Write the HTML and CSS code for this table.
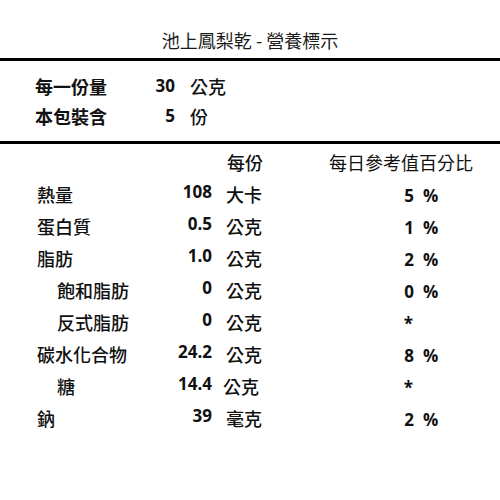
FILE: index.html
```html
<!DOCTYPE html>
<html lang="zh-Hant">
<head>
<meta charset="utf-8">
<title>池上鳳梨乾 - 營養標示</title>
<link rel="stylesheet" href="styles.css">
</head>
<body>
<div class="label">
  <h1 class="title">池上鳳梨乾 - 營養標示</h1>
  <div class="rule"></div>
  <div class="serving">
    <span class="s-name">每一份量</span><span class="s-val">30</span><span class="s-unit">公克</span>
    <span class="s-name">本包裝含</span><span class="s-val">5</span><span class="s-unit">份</span>
  </div>
  <div class="rule"></div>
  <div class="facts">
    <span class="h-blank"></span><span class="h-per">每份</span><span class="h-dv">每日參考值百分比</span>

    <span class="name">熱量</span><span class="val">108</span><span class="unit">大卡</span><span class="pct">5</span><span class="sign">%</span>
    <span class="name">蛋白質</span><span class="val">0.5</span><span class="unit">公克</span><span class="pct">1</span><span class="sign">%</span>
    <span class="name">脂肪</span><span class="val">1.0</span><span class="unit">公克</span><span class="pct">2</span><span class="sign">%</span>
    <span class="name sub">飽和脂肪</span><span class="val">0</span><span class="unit">公克</span><span class="pct">0</span><span class="sign">%</span>
    <span class="name sub">反式脂肪</span><span class="val">0</span><span class="unit">公克</span><span class="pct star">*</span><span class="sign"></span>
    <span class="name">碳水化合物</span><span class="val">24.2</span><span class="unit">公克</span><span class="pct">8</span><span class="sign">%</span>
    <span class="name sub">糖</span><span class="val">14.4</span><span class="unit tight">公克</span><span class="pct star">*</span><span class="sign"></span>
    <span class="name">鈉</span><span class="val">39</span><span class="unit">毫克</span><span class="pct">2</span><span class="sign">%</span>
  </div>
</div>
</body>
</html>
```
FILE: styles.css
```css
html, body {
  margin: 0;
  padding: 0;
  background: #ffffff;
}

body {
  font-family: "Noto Sans CJK TC", "Noto Sans", sans-serif;
  color: #111111;
  font-size: 18px;
}

.label {
  width: 500px;
}

.title {
  margin: 0;
  padding-top: 25px;
  height: 30px;
  line-height: 30px;
  margin-bottom: 3px;
  font-size: 18px;
  font-weight: 400;
  text-align: center;
  color: #1a1a1a;
}

.rule {
  height: 3px;
  background: #000000;
}

.serving {
  display: grid;
  grid-template-columns: 120px 20px auto;
  padding: 10px 0 10px 35px;
  line-height: 30px;
}

.s-name {
  font-weight: 700;
}

.s-val {
  font-family: "Open Sans", "Noto Sans", sans-serif;
  font-weight: 700;
  font-size: 17px;
  text-align: right;
}

.s-unit {
  padding-left: 15px;
  font-weight: 500;
}

.facts {
  display: grid;
  grid-template-columns: 133px 42px 110px 92px auto;
  padding: 2px 0 0 37px;
  line-height: 32px;
}

.h-blank {
  grid-column: 1 / 3;
}

.h-per {
  padding-left: 15px;
  font-weight: 500;
}

.h-dv {
  grid-column: 4 / 6;
  padding-left: 7px;
  font-weight: 400;
}

.name {
  font-weight: 500;
}

.name.sub {
  padding-left: 20px;
}

.val {
  font-family: "Open Sans", "Noto Sans", sans-serif;
  font-weight: 700;
  font-size: 17px;
  text-align: right;
  line-height: 28px;
  padding-bottom: 4px;
}

.unit {
  padding-left: 14px;
  font-weight: 500;
}

.unit.tight {
  padding-left: 11px;
}

.pct {
  font-family: "Open Sans", "Noto Sans", sans-serif;
  font-weight: 700;
  font-size: 17px;
  text-align: right;
  line-height: 28px;
  padding-top: 4px;
}

.pct.star {
  padding-right: 1px;
}

.sign {
  font-family: "Open Sans", "Noto Sans", sans-serif;
  font-weight: 700;
  font-size: 17px;
  padding-left: 9px;
  line-height: 28px;
  padding-top: 4px;
}
```
